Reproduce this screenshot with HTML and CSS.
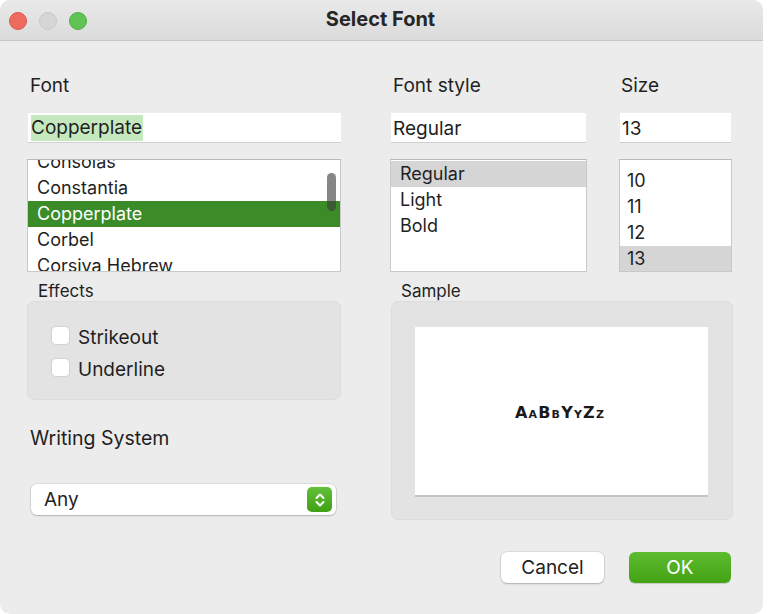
FILE: index.html
```html
<!DOCTYPE html>
<html>
<head>
<meta charset="utf-8">
<link rel="stylesheet" href="styles.css">
</head>
<body>
<div class="window">
  <div class="titlebar">
    <div class="lights">
      <span class="light red"></span>
      <span class="light gray"></span>
      <span class="light green"></span>
    </div>
    <div class="title">Select Font</div>
  </div>
  <div class="content">
    <div class="top">
      <div class="col col-font">
        <div class="label">Font</div>
        <div class="input"><span class="sel">Copperplate</span></div>
        <div class="list font-list">
          <div class="items scrolled">
            <div class="item">Consolas</div>
            <div class="item">Constantia</div>
            <div class="item active">Copperplate</div>
            <div class="item">Corbel</div>
            <div class="item">Corsiva Hebrew</div>
          </div>
          <div class="thumb"></div>
        </div>
      </div>
      <div class="col col-style">
        <div class="label">Font style</div>
        <div class="input">Regular</div>
        <div class="list style-list">
          <div class="items">
            <div class="item current">Regular</div>
            <div class="item">Light</div>
            <div class="item">Bold</div>
          </div>
        </div>
      </div>
      <div class="col col-size">
        <div class="label">Size</div>
        <div class="input">13</div>
        <div class="list size-list">
          <div class="items">
            <div class="item">10</div>
            <div class="item">11</div>
            <div class="item">12</div>
            <div class="item current">13</div>
          </div>
        </div>
      </div>
    </div>
    <div class="bottom">
      <div class="left">
        <div class="group-title">Effects</div>
        <div class="group effects">
          <label class="check"><span class="box"></span><span class="check-text">Strikeout</span></label>
          <label class="check"><span class="box"></span><span class="check-text">Underline</span></label>
        </div>
        <div class="label ws">Writing System</div>
        <div class="combo">
          <span>Any</span>
          <span class="stepper">
            <svg width="14" height="18" viewBox="0 0 14 18"><path d="M3.5 7 L7 3.5 L10.5 7 M3.5 11 L7 14.5 L10.5 11" fill="none" stroke="#fff" stroke-width="2" stroke-linecap="round" stroke-linejoin="round"/></svg>
          </span>
        </div>
      </div>
      <div class="right">
        <div class="group-title">Sample</div>
        <div class="group sample">
          <div class="sample-box"><span class="sample-text">AaBbYyZz</span></div>
        </div>
      </div>
    </div>
    <div class="buttons">
      <button class="btn cancel">Cancel</button>
      <button class="btn ok">OK</button>
    </div>
  </div>
</div>
</body>
</html>
```
FILE: styles.css
```css
html, body {
  margin: 0;
  padding: 0;
  background: #ffffff;
}
body {
  font-family: Inter, "Liberation Sans", sans-serif;
  color: #1f1f1f;
}
.window {
  width: 763px;
  height: 614px;
  background: #ececec;
  border-radius: 10px;
  overflow: hidden;
}
.titlebar {
  height: 40px;
  border-bottom: 1px solid #c6c6c6;
  background: linear-gradient(#e9e9e9, #dbdbdb);
  display: flex;
  align-items: center;
  position: relative;
}
.lights {
  display: flex;
  gap: 12px;
  padding-left: 9px;
  padding-top: 1px;
}
.light {
  width: 18px;
  height: 18px;
  border-radius: 50%;
  box-sizing: border-box;
}
.light.red { background: #ef6a5e; border: 1px solid #e0564b; }
.light.gray { background: #d6d6d6; border: 1px solid #c8c8c8; }
.light.green { background: #5fc454; border: 1px solid #4eb043; }
.title {
  position: absolute;
  left: 0;
  right: 0;
  top: 8px;
  text-align: center;
  font-weight: 700;
  font-size: 20px;
  line-height: 22px;
  color: #262626;
  padding-right: 2px;
}
.content {
  padding: 34px 0 0 27px;
}
.top {
  display: flex;
}
.col { display: flex; flex-direction: column; }
.col-font { width: 314px; }
.col-style { width: 197px; margin-left: 49px; }
.col-size { width: 113px; margin-left: 32px; }
.label {
  font-size: 19px;
  line-height: 22px;
  height: 22px;
  padding-left: 3px;
}
.col-style .label { padding-left: 3px; }
.col-size .label { padding-left: 2px; }
.input {
  margin-top: 16px;
  height: 30px;
  box-sizing: border-box;
  background: #fff;
  border-bottom: 1px solid #cfcfcf;
  font-size: 19px;
  line-height: 31px;
  padding-left: 3px;
  margin-left: 1px;
}
.col-style .input { margin-left: 1px; margin-right: 1px; padding-left: 2px; }
.col-size .input { margin-left: 1px; margin-right: 1px; padding-left: 2px; }
.sel {
  background: #c6e8bf;
  display: inline-block;
  line-height: 26px;
  padding-right: 1px;
  vertical-align: 1px;
}
.list {
  margin-top: 16px;
  height: 113px;
  box-sizing: border-box;
  background: #fff;
  border: 1px solid #c9c9c9;
  border-top-color: #b9b9b9;
  overflow: hidden;
  position: relative;
}
.items { font-size: 18px; }
.item {
  height: 26px;
  line-height: 26px;
  padding-left: 9px;
}
.scrolled { margin-top: -11px; }
.font-list .item.active { background: #3b8b29; color: #fff; }
.item.current { background: #d5d5d5; }
.style-list .items { margin-top: 1px; }
.size-list .items { margin-top: 8px; }
.size-list .item { padding-left: 7px; }
.thumb {
  position: absolute;
  right: 4px;
  top: 13px;
  width: 9px;
  height: 38px;
  border-radius: 5px;
  background: rgba(60, 60, 60, 0.62);
}
.bottom {
  display: flex;
  margin-top: 9px;
}
.left { width: 314px; display: flex; flex-direction: column; }
.right { width: 342px; margin-left: 50px; display: flex; flex-direction: column; }
.group-title {
  font-size: 17px;
  line-height: 20px;
  height: 20px;
  padding-left: 11px;
}
.right .group-title { padding-left: 10px; }
.group {
  background: #e3e3e3;
  border: 1px solid #dcdcdc;
  border-radius: 7px;
  box-sizing: border-box;
}
.effects {
  height: 99px;
  padding: 24px 0 0 23px;
  display: flex;
  flex-direction: column;
  gap: 13px;
}
.check {
  display: flex;
  align-items: center;
  font-size: 19px;
  height: 19px;
}
.check-text {
  position: relative;
  top: 2px;
}
.box {
  width: 19px;
  height: 19px;
  box-sizing: border-box;
  background: #fff;
  border: 1px solid #d3d3d3;
  border-radius: 5px;
  margin-right: 8px;
}
.ws {
  margin-top: 27px;
  font-size: 19.5px;
}
.combo {
  margin-top: 35px;
  margin-left: 4px;
  width: 305px;
  height: 31px;
  box-sizing: border-box;
  background: #fff;
  border-radius: 6px;
  box-shadow: 0 0 0 0.5px rgba(0,0,0,0.12), 0 1px 2px rgba(0,0,0,0.2);
  display: flex;
  align-items: center;
  justify-content: space-between;
  padding: 0 4px 0 13px;
  font-size: 19px;
}
.stepper {
  width: 25px;
  height: 25px;
  border-radius: 5px;
  background: linear-gradient(#62c03a, #3fa012);
  display: flex;
  align-items: center;
  justify-content: center;
}
.sample {
  height: 219px;
  padding: 25px 24px 0 23px;
}
.sample-box {
  height: 168px;
  background: #fff;
  border-bottom: 2px solid #c4c4c4;
  display: flex;
  align-items: center;
  justify-content: center;
}
.sample-text {
  font-family: "DejaVu Sans", sans-serif;
  font-weight: 700;
  font-variant: small-caps;
  font-size: 16px;
  letter-spacing: 1.2px;
  color: #1a1a1a;
  padding-top: 3px;
  padding-right: 3px;
}
.buttons {
  display: flex;
  justify-content: flex-end;
  gap: 25px;
  margin-top: 32px;
  padding-right: 32px;
}
.btn {
  font-family: Inter, "Liberation Sans", sans-serif;
  font-size: 19px;
  height: 31px;
  width: 103px;
  border: none;
  border-radius: 6px;
  padding: 0;
}
.cancel {
  background: #fff;
  color: #222;
  box-shadow: 0 0 0 0.5px rgba(0,0,0,0.12), 0 1px 2px rgba(0,0,0,0.22);
}
.ok {
  width: 102px;
  background: linear-gradient(#5dbb2e, #42a315);
  color: #fff;
  box-shadow: 0 1px 1px rgba(0,0,0,0.15);
}
```
